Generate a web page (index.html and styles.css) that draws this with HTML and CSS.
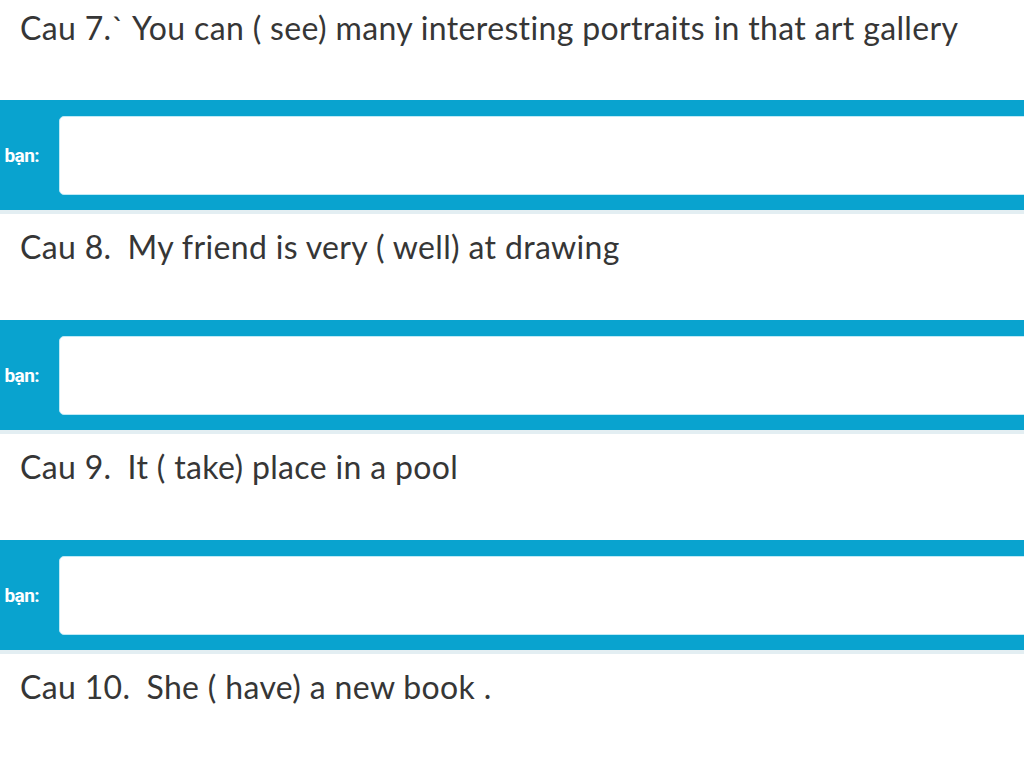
FILE: index.html
```html
<!DOCTYPE html>
<html lang="en">
<head>
    <meta charset="UTF-8">
    <title>Bai tap</title>
    <link rel="stylesheet" href="styles.css">
</head>
<body>
    <div class="sheet">
        <div class="question first">
            <p>Cau 7.` You can ( see) many interesting portraits in that art gallery</p>
        </div>
        <div class="answer">
            <label class="answer-label">bạn:</label>
            <div class="answer-box"></div>
        </div>

        <div class="question">
            <p><span class="num">Cau 8.</span>My friend is very ( well) at drawing</p>
        </div>
        <div class="answer">
            <label class="answer-label">bạn:</label>
            <div class="answer-box"></div>
        </div>

        <div class="question">
            <p><span class="num">Cau 9.</span>It ( take) place in a pool</p>
        </div>
        <div class="answer">
            <label class="answer-label">bạn:</label>
            <div class="answer-box"></div>
        </div>

        <div class="question">
            <p><span class="num">Cau 10.</span>She ( have) a new book .</p>
        </div>
    </div>
</body>
</html>
```

FILE: styles.css
```css
body {
    margin: 0;
    background-color: #ffffff;
    font-family: Lato, "Open Sans", sans-serif;
    overflow: hidden;
}

.sheet {
    width: 1024px;
    height: 757px;
    overflow: hidden;
}

.question {
    height: 110px;
    padding-left: 20px;
    border-top: 4px solid #e3eef2;
    box-sizing: border-box;
}

.question.first {
    height: 100px;
    border-top: none;
}

.question p {
    margin: 0;
    padding-top: 8px;
    font-size: 32px;
    letter-spacing: 0.35px;
    line-height: 40px;
    color: #363636;
}

.question:not(.first) p {
    padding-top: 13px;
}

.num {
    margin-right: 16px;
}

.answer {
    display: flex;
    align-items: center;
    height: 110px;
    padding: 16px 0 15px;
    box-sizing: border-box;
    background-color: #09a3cf;
}

.answer-label {
    width: 39px;
    flex-shrink: 0;
    margin-right: 20px;
    text-align: right;
    white-space: nowrap;
    font-family: Roboto, sans-serif;
    font-size: 19px;
    font-weight: bold;
    letter-spacing: -0.6px;
    color: #ffffff;
}

.answer-box {
    flex: 1;
    height: 79px;
    margin-right: -10px;
    background-color: #ffffff;
    border: 1px solid #bfeaf6;
    border-radius: 5px;
    box-sizing: border-box;
}
```
